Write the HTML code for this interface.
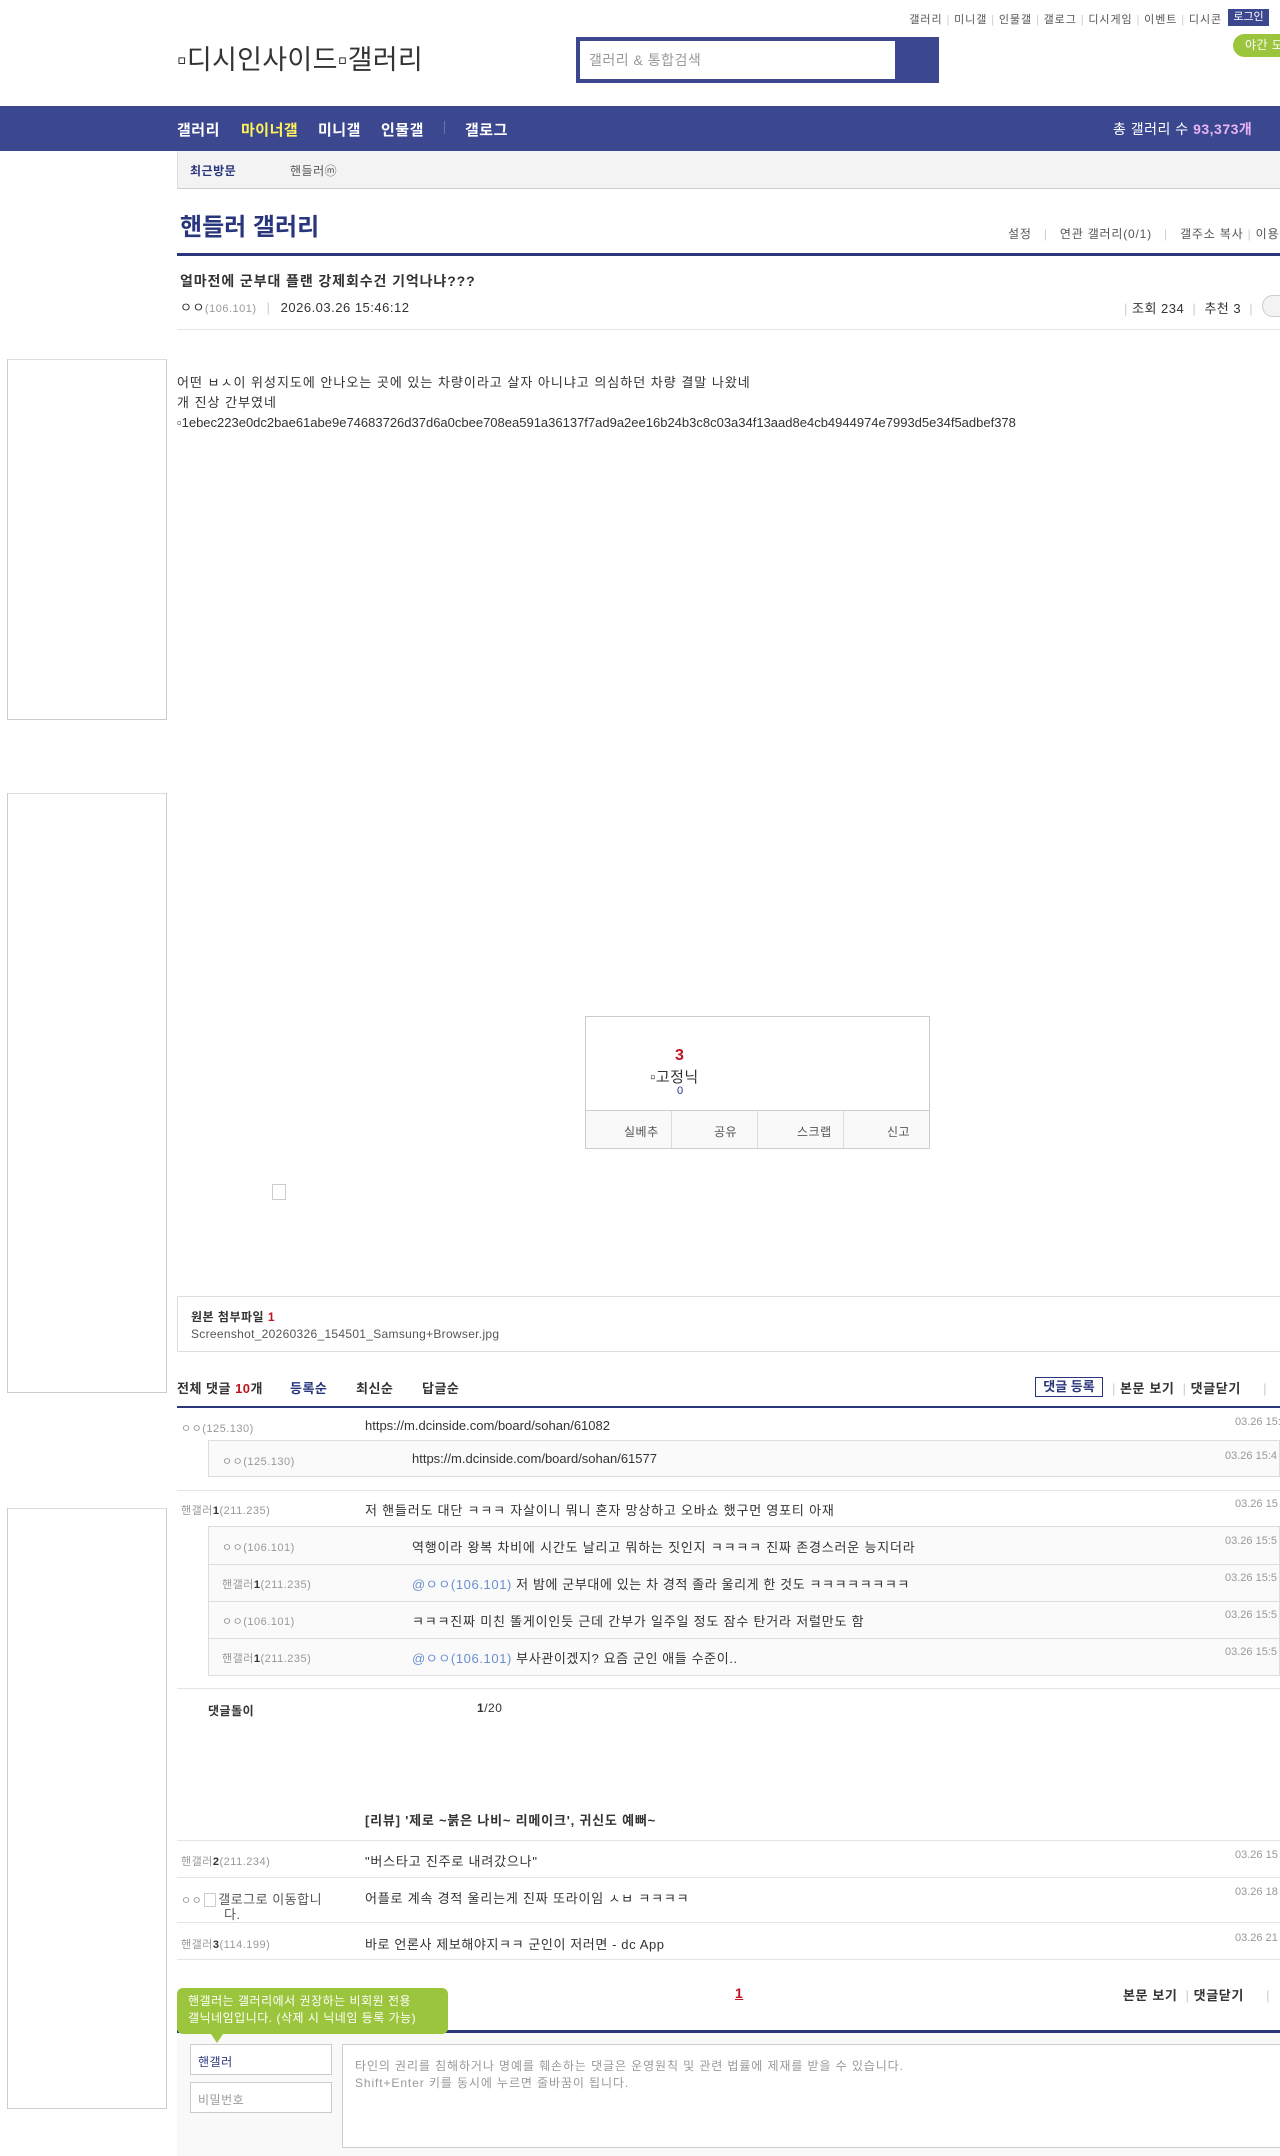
<!DOCTYPE html>
<html><head><meta charset="utf-8"><style>
*{margin:0;padding:0;box-sizing:border-box}
body{width:1280px;height:2156px;position:relative;overflow:hidden;background:#fff;font-family:"Liberation Sans","Noto Sans CJK KR",sans-serif;color:#333;font-size:13px;letter-spacing:0.5px}
.a{position:absolute;white-space:nowrap}
.nav{position:absolute;left:0;top:106px;width:1280px;height:45px;background:#3b4890}
.nav span{position:absolute;top:13px;color:#fff;font-weight:bold;font-size:15px}
.ad{position:absolute;left:7px;width:160px;border:1px solid #ccc;border-top-color:#ddd}
.g{color:#999;font-size:11px}
.cm{font-size:13px;color:#333}
.u{letter-spacing:0}
.dt{color:#999;font-size:11px;letter-spacing:0}
.hl{position:absolute;left:177px;right:0;height:1px;background:#e5e5e5}
.rb{position:absolute;left:208px;right:0;background:#fafafa;border:1px solid #ddd}
.rb .s{position:absolute;left:0;right:0;height:1px;background:#ddd}
</style></head><body>
<div class="a g" style="right:58px;top:11px;color:#555;font-size:11px;letter-spacing:0.9px">갤러리 <span style="color:#ccc">|</span> 미니갤 <span style="color:#ccc">|</span> 인물갤 <span style="color:#ccc">|</span> 갤로그 <span style="color:#ccc">|</span> 디시게임 <span style="color:#ccc">|</span> 이벤트 <span style="color:#ccc">|</span> 디시콘</div>
<div class="a" style="left:1228px;top:9px;width:41px;height:17px;background:#3b4890;color:#fff;font-size:11px;text-align:center;line-height:17px;letter-spacing:0">로그인</div>
<div class="a" style="left:1233px;top:34px;width:60px;height:23px;background:#9bc53d;border-radius:12px;color:#fff;font-size:12px;line-height:23px;padding-left:12px">야간 모드</div>
<div class="a" style="left:177px;top:38px;font-size:27px;color:#333;letter-spacing:0.3px">▫디시인사이드▫갤러리</div>
<div class="a" style="left:576px;top:37px;width:363px;height:46px;background:#3b4890"></div>
<div class="a" style="left:580px;top:41px;width:315px;height:38px;background:#fff;color:#999;font-size:14px;line-height:38px;padding-left:9px">갤러리 &amp; 통합검색</div>
<div class="nav"><span style="left:177px">갤러리</span><span style="left:241px;color:#fff35b">마이너갤</span><span style="left:318px">미니갤</span><span style="left:381px">인물갤</span><span style="left:444px;top:15px;width:1px;height:13px;background:#6a75ad"></span><span style="left:465px">갤로그</span><span style="left:1113px;font-weight:normal;font-size:14px">총 갤러리 수 <b style="color:#e8b4f3">93,373개</b></span></div>
<div class="a" style="left:177px;top:151px;width:1103px;height:38px;background:#f3f3f3;border-left:1px solid #ddd;border-bottom:1px solid #ccc"></div>
<div class="a" style="left:190px;top:162px;font-size:12px;font-weight:bold;color:#29367c">최근방문</div>
<div class="a" style="left:290px;top:162px;font-size:12px;color:#555">핸들러ⓜ</div>
<div class="a" style="left:180px;top:207px;font-size:24px;font-weight:bold;color:#29367c;letter-spacing:0">핸들러 갤러리</div>
<div class="a" style="left:1008px;top:225px;font-size:12px;color:#555;letter-spacing:0.8px">설정 <span style="color:#ccc;margin:0 8px">|</span> 연관 갤러리(0/1) <span style="color:#ccc;margin:0 8px">|</span> 갤주소 복사 <span style="color:#ccc">|</span> 이용</div>
<div class="a" style="left:177px;top:253px;width:1103px;height:3px;background:#29367c"></div>
<div class="a" style="left:180px;top:271px;font-size:14px;font-weight:bold;color:#333;letter-spacing:0.9px">얼마전에 군부대 플랜 강제회수건 기억나냐???</div>
<div class="a" style="left:180px;top:297px;font-size:13px">ㅇㅇ<span class="g">(106.101)</span> <span style="color:#ccc;margin:0 6px">|</span> 2026.03.26 15:46:12</div>
<div class="a" style="left:1124px;top:298px;font-size:13px"><span style="color:#ccc">|</span> 조회 234 <span style="color:#ccc;margin:0 4px">|</span> 추천 3 <span style="color:#ccc;margin:0 4px">|</span></div>
<div class="a" style="left:1262px;top:295px;width:30px;height:22px;border:1px solid #ccc;border-radius:11px;background:#f3f3f3"></div>
<div class="hl" style="top:329px"></div>
<div class="ad" style="top:359px;height:361px"></div>
<div class="ad" style="top:793px;height:600px"></div>
<div class="ad" style="top:1508px;height:601px"></div>
<div class="a" style="left:177px;top:373px;font-size:13px;line-height:20px;letter-spacing:1px">어떤 ㅂㅅ이 위성지도에 안나오는 곳에 있는 차량이라고 살자 아니냐고 의심하던 차량 결말 나왔네<br>개 진상 간부였네<br><span style="letter-spacing:0">▫1ebec223e0dc2bae61abe9e74683726d37d6a0cbee708ea591a36137f7ad9a2ee16b24b3c8c03a34f13aad8e4cb4944974e7993d5e34f5adbef378</span></div>
<div class="a" style="left:585px;top:1016px;width:345px;height:133px;border:1px solid #ccc"></div>
<div class="a" style="left:586px;top:1110px;width:343px;height:38px;background:#f9f9f9;border-top:1px solid #ccc"></div>
<div class="a" style="left:671px;top:1111px;width:1px;height:37px;background:#ddd"></div>
<div class="a" style="left:757px;top:1111px;width:1px;height:37px;background:#ddd"></div>
<div class="a" style="left:843px;top:1111px;width:1px;height:37px;background:#ddd"></div>
<div class="a" style="left:675px;top:1047px;font-size:16px;font-weight:bold;color:#c1121f">3</div>
<div class="a" style="left:650px;top:1066px;font-size:15px;color:#333">▫고정닉</div>
<div class="a" style="left:677px;top:1085px;font-size:11px;color:#29367c">0</div>
<div class="a" style="left:624px;top:1123px;font-size:12px;color:#555">실베추</div>
<div class="a" style="left:714px;top:1123px;font-size:12px;color:#555">공유</div>
<div class="a" style="left:797px;top:1123px;font-size:12px;color:#555">스크랩</div>
<div class="a" style="left:887px;top:1123px;font-size:12px;color:#555">신고</div>
<div class="a" style="left:272px;top:1184px;width:14px;height:16px;border:1px solid #ccc"></div>
<div class="a" style="left:177px;top:1296px;width:1103px;height:56px;border:1px solid #ddd;border-right:0"></div>
<div class="a" style="left:191px;top:1308px;font-size:12px;font-weight:bold">원본 첨부파일 <span style="color:#c1121f">1</span></div>
<div class="a u" style="left:191px;top:1327px;font-size:12px;color:#555;letter-spacing:0.3px">Screenshot_20260326_154501_Samsung+Browser.jpg</div>
<div class="a" style="left:177px;top:1378px;font-size:13px;font-weight:bold">전체 댓글 <span style="color:#c1121f">10</span>개</div>
<div class="a" style="left:290px;top:1378px;font-size:13px;font-weight:bold;color:#29367c">등록순</div>
<div class="a" style="left:356px;top:1378px;font-size:13px;font-weight:bold">최신순</div>
<div class="a" style="left:422px;top:1378px;font-size:13px;font-weight:bold">답글순</div>
<div class="a" style="left:1035px;top:1377px;width:68px;height:20px;border:1px solid #29367c;font-size:13px;font-weight:bold;color:#29367c;text-align:center;line-height:18px;letter-spacing:0">댓글 등록</div>
<div class="a" style="left:1112px;top:1378px;font-size:13px;font-weight:bold;letter-spacing:0.6px"><span style="color:#ccc;font-weight:normal;margin-right:4px">|</span>본문 보기 <span style="color:#ccc;font-weight:normal;margin:0 4px">|</span>댓글닫기 <span style="color:#ccc;font-weight:normal;margin-left:18px">|</span></div>
<div class="a" style="left:177px;top:1406px;width:1103px;height:2px;background:#29367c"></div>
<div class="a g" style="left:181px;top:1420px">ㅇㅇ(125.130)</div>
<div class="a cm u" style="left:365px;top:1418px">https://m.dcinside.com/board/sohan/61082</div>
<div class="a dt" style="left:1235px;top:1416px">03.26 15:</div>
<div class="rb" style="top:1440px;height:37px"></div>
<div class="a g" style="left:222px;top:1453px">ㅇㅇ(125.130)</div>
<div class="a cm u" style="left:412px;top:1451px">https://m.dcinside.com/board/sohan/61577</div>
<div class="a dt" style="left:1225px;top:1450px">03.26 15:4</div>
<div class="hl" style="top:1490px"></div>
<div class="a g" style="left:181px;top:1502px">핸갤러<b style="color:#333">1</b>(211.235)</div>
<div class="a cm" style="left:365px;top:1500px;letter-spacing:0.8px">저 핸들러도 대단 ㅋㅋㅋ 자살이니 뭐니 혼자 망상하고 오바쇼 했구먼 영포티 아재</div>
<div class="a dt" style="left:1235px;top:1498px">03.26 15</div>
<div class="rb" style="top:1526px;height:150px"><div class="s" style="top:37px"></div><div class="s" style="top:74px"></div><div class="s" style="top:111px"></div></div>
<div class="a g" style="left:222px;top:1539px">ㅇㅇ(106.101)</div>
<div class="a cm" style="left:412px;top:1537px;letter-spacing:0.8px">역행이라 왕복 차비에 시간도 날리고 뭐하는 짓인지 ㅋㅋㅋㅋ 진짜 존경스러운 능지더라</div>
<div class="a dt" style="left:1225px;top:1535px">03.26 15:5</div>
<div class="a g" style="left:222px;top:1576px">핸갤러<b style="color:#333">1</b>(211.235)</div>
<div class="a cm" style="left:412px;top:1574px;letter-spacing:0.6px"><span style="color:#6a8fd0">@ㅇㅇ(106.101)</span> 저 밤에 군부대에 있는 차 경적 졸라 울리게 한 것도 ㅋㅋㅋㅋㅋㅋㅋㅋ</div>
<div class="a dt" style="left:1225px;top:1572px">03.26 15:5</div>
<div class="a g" style="left:222px;top:1613px">ㅇㅇ(106.101)</div>
<div class="a cm" style="left:412px;top:1611px;letter-spacing:0.8px">ㅋㅋㅋ진짜 미친 똘게이인듯 근데 간부가 일주일 정도 잠수 탄거라 저럴만도 함</div>
<div class="a dt" style="left:1225px;top:1609px">03.26 15:5</div>
<div class="a g" style="left:222px;top:1650px">핸갤러<b style="color:#333">1</b>(211.235)</div>
<div class="a cm" style="left:412px;top:1648px;letter-spacing:0.6px"><span style="color:#6a8fd0">@ㅇㅇ(106.101)</span> 부사관이겠지? 요즘 군인 애들 수준이..</div>
<div class="a dt" style="left:1225px;top:1646px">03.26 15:5</div>
<div class="hl" style="top:1688px"></div>
<div class="a" style="left:208px;top:1702px;font-size:12px;font-weight:bold">댓글돌이</div>
<div class="a" style="left:477px;top:1701px;font-size:12px"><b>1</b>/20</div>
<div class="a" style="left:365px;top:1810px;font-size:13px;font-weight:bold;letter-spacing:0.8px">[리뷰] '제로 ~붉은 나비~ 리메이크', 귀신도 예뻐~</div>
<div class="hl" style="top:1840px"></div>
<div class="a g" style="left:181px;top:1853px">핸갤러<b style="color:#333">2</b>(211.234)</div>
<div class="a cm" style="left:365px;top:1851px;letter-spacing:0.8px">"버스타고 진주로 내려갔으나"</div>
<div class="a dt" style="left:1235px;top:1849px">03.26 15</div>
<div class="hl" style="top:1877px"></div>
<div class="a g" style="left:181px;top:1893px;line-height:13px">ㅇㅇ<span style="display:inline-block;width:12px;height:14px;border:1px solid #ccc;vertical-align:-3px;margin:0 2px"></span><span style="color:#555;font-size:13px">갤로그로 이동합니</span><br><span style="margin-left:43px;color:#555;font-size:13px">다.</span></div>
<div class="a cm" style="left:365px;top:1888px;letter-spacing:0.8px">어플로 계속 경적 울리는게 진짜 또라이임 ㅅㅂ ㅋㅋㅋㅋ</div>
<div class="a dt" style="left:1235px;top:1886px">03.26 18</div>
<div class="hl" style="top:1922px"></div>
<div class="a g" style="left:181px;top:1936px">핸갤러<b style="color:#333">3</b>(114.199)</div>
<div class="a cm" style="left:365px;top:1934px;letter-spacing:0.6px">바로 언론사 제보해야지ㅋㅋ 군인이 저러면 - dc App</div>
<div class="a dt" style="left:1235px;top:1932px">03.26 21</div>
<div class="hl" style="top:1959px"></div>
<div class="a" style="left:735px;top:1985px;font-size:14px;font-weight:bold;color:#c1121f;text-decoration:underline">1</div>
<div class="a" style="left:1123px;top:1985px;font-size:13px;font-weight:bold;letter-spacing:0.6px">본문 보기 <span style="color:#ccc;font-weight:normal;margin:0 4px">|</span>댓글닫기 <span style="color:#ccc;font-weight:normal;margin-left:18px">|</span></div>
<div class="a" style="left:177px;top:2030px;width:1103px;height:126px;background:#f9f9f9"></div>
<div class="a" style="left:177px;top:2030px;width:1103px;height:3px;background:#29367c"></div>
<div class="a" style="left:177px;top:1988px;width:271px;height:46px;background:#9bc53d;border-radius:6px;color:#fff;font-size:12px;line-height:17px;padding:5px 11px">핸갤러는 갤러리에서 권장하는 비회원 전용<br>갤닉네임입니다. (삭제 시 닉네임 등록 가능)</div>
<div class="a" style="left:211px;top:2034px;width:0;height:0;border-left:6px solid transparent;border-right:6px solid transparent;border-top:9px solid #9bc53d"></div>
<div class="a" style="left:190px;top:2044px;width:142px;height:31px;background:#fff;border:1px solid #ccc;font-size:12px;color:#29367c;padding:8px 7px">핸갤러</div>
<div class="a" style="left:190px;top:2082px;width:142px;height:31px;background:#fff;border:1px solid #ccc;font-size:12px;color:#999;padding:8px 7px">비밀번호</div>
<div class="a" style="left:342px;top:2044px;width:938px;height:104px;background:#fff;border:1px solid #ccc;border-right:0;font-size:12px;color:#999;padding:13px 12px;line-height:17px;letter-spacing:0.9px">타인의 권리를 침해하거나 명예를 훼손하는 댓글은 운영원칙 및 관련 법률에 제재를 받을 수 있습니다.<br>Shift+Enter 키를 동시에 누르면 줄바꿈이 됩니다.</div>
</body></html>
